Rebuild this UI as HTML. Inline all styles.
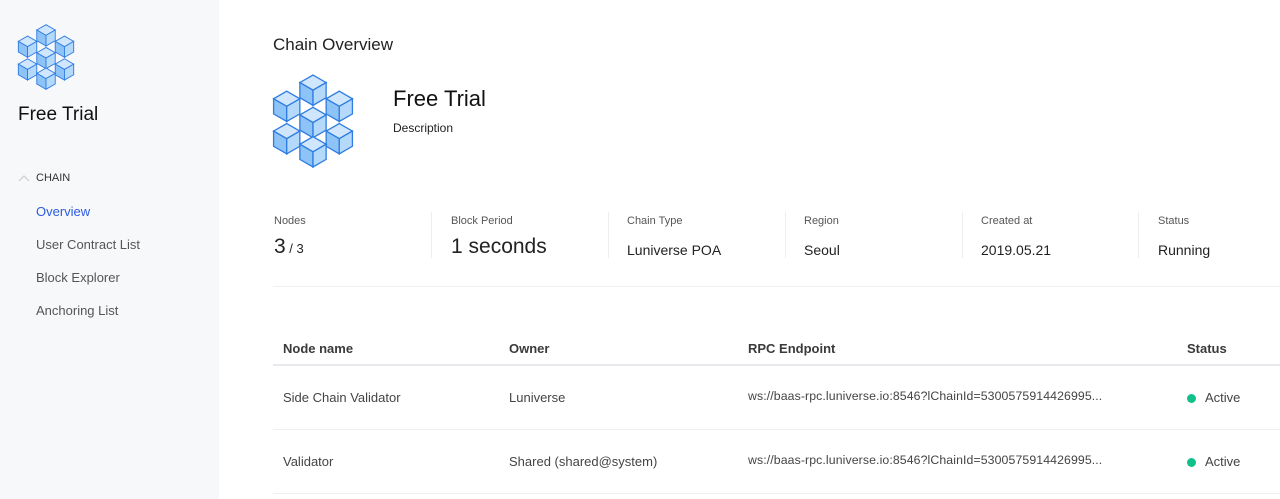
<!DOCTYPE html>
<html><head><meta charset="utf-8"><style>
*{margin:0;padding:0;box-sizing:border-box}
body{width:1280px;height:499px;overflow:hidden;background:#fff;font-family:"Liberation Sans",sans-serif;position:relative;color:#222}
.a{position:absolute;white-space:nowrap}
#side{position:absolute;left:0;top:0;width:219px;height:499px;background:#f7f8fa}
.lbl{font-size:11px;color:#555}
.val{font-size:14px;color:#222}
.div{position:absolute;top:212px;width:1px;height:46px;background:#eee}
.th{font-size:13px;color:#3a3a3a;font-weight:bold;top:341px}
.td{font-size:13px;color:#444}
.dot{position:absolute;width:9px;height:9px;border-radius:50%;background:#12c08a}
</style></head><body>
<svg width="0" height="0" style="position:absolute"><defs>
<g id="c"><polygon points="13,0 26,7.5 13,15 0,7.5" fill="#cfe6fd" stroke="#2f7de1" stroke-width="1.3"/><polygon points="0,7.5 13,15 13,30 0,22.5" fill="#8ec3f7" stroke="#2f7de1" stroke-width="1.3"/><polygon points="26,7.5 13,15 13,30 26,22.5" fill="#b5d9fb" stroke="#2f7de1" stroke-width="1.3"/></g>
<g id="ico"><g stroke="#9cc7f5" stroke-width="1"><line x1="14" y1="40" x2="67" y2="40"/><line x1="14" y1="72" x2="67" y2="72"/><line x1="40" y1="16" x2="40" y2="80"/></g><use href="#c" x="27" y="1"/><use href="#c" x="1" y="17"/><use href="#c" x="53" y="17"/><use href="#c" x="27" y="33"/><use href="#c" x="1" y="49"/><use href="#c" x="53" y="49"/><use href="#c" x="27" y="62"/></g>
</defs></svg>
<div id="side">
<svg class="a" style="left:16px;top:24px" width="60" height="66" viewBox="0 0 80 93"><use href="#ico"/></svg>
<div class="a" style="left:18px;top:104px;font-size:19px;color:#111">Free Trial</div>
<svg class="a" style="left:18px;top:174px" width="12" height="8"><polyline points="1,7 6,2 11,7" fill="none" stroke="#ccc" stroke-width="1.2"/></svg>
<div class="a" style="left:36px;top:172px;font-size:11px;color:#333">CHAIN</div>
<div class="a" style="left:36px;top:204px;font-size:13px;color:#2e5be0">Overview</div>
<div class="a" style="left:36px;top:237px;font-size:13px;color:#555">User Contract List</div>
<div class="a" style="left:36px;top:270px;font-size:13px;color:#555">Block Explorer</div>
<div class="a" style="left:36px;top:303px;font-size:13px;color:#555">Anchoring List</div>
</div>
<div class="a" style="left:273px;top:35px;font-size:17px;color:#222">Chain Overview</div>
<svg class="a" style="left:272px;top:74px" width="82" height="94" viewBox="0 0 80 93"><use href="#ico"/></svg>
<div class="a" style="left:393px;top:86px;font-size:22px;color:#111">Free Trial</div>
<div class="a" style="left:393px;top:121px;font-size:12px;color:#222">Description</div>

<div class="div" style="left:431px"></div><div class="div" style="left:608px"></div><div class="div" style="left:785px"></div><div class="div" style="left:962px"></div><div class="div" style="left:1138px"></div>
<div class="a lbl" style="left:274px;top:215px">Nodes</div>
<div class="a" style="left:274px;top:235px;font-size:21px">3<span style="font-size:13px"> / 3</span></div>
<div class="a lbl" style="left:451px;top:215px">Block Period</div>
<div class="a" style="left:451px;top:235px;font-size:21px">1 seconds</div>
<div class="a lbl" style="left:627px;top:215px">Chain Type</div>
<div class="a val" style="left:627px;top:242px">Luniverse POA</div>
<div class="a lbl" style="left:804px;top:215px">Region</div>
<div class="a val" style="left:804px;top:242px">Seoul</div>
<div class="a lbl" style="left:981px;top:215px">Created at</div>
<div class="a val" style="left:981px;top:242px">2019.05.21</div>
<div class="a lbl" style="left:1158px;top:215px">Status</div>
<div class="a val" style="left:1158px;top:242px">Running</div>
<div class="a" style="left:273px;top:286px;width:1007px;height:1px;background:#f0f0f0"></div>

<div class="a th" style="left:283px">Node name</div>
<div class="a th" style="left:509px">Owner</div>
<div class="a th" style="left:748px">RPC Endpoint</div>
<div class="a th" style="left:1187px">Status</div>
<div class="a" style="left:273px;top:364px;width:1007px;height:2px;background:#e8e9ec"></div>
<div class="a td" style="left:283px;top:390px">Side Chain Validator</div>
<div class="a td" style="left:509px;top:390px">Luniverse</div>
<div class="a td" style="left:748px;top:389px;font-size:12.3px;letter-spacing:0.1px">ws://baas-rpc.luniverse.io:8546?lChainId=5300575914426995...</div>
<div class="dot" style="left:1187px;top:394px"></div><div class="a td" style="left:1205px;top:390px">Active</div>
<div class="a" style="left:273px;top:429px;width:1007px;height:1px;background:#eee"></div>
<div class="a td" style="left:283px;top:454px">Validator</div>
<div class="a td" style="left:509px;top:454px">Shared (shared@system)</div>
<div class="a td" style="left:748px;top:453px;font-size:12.3px;letter-spacing:0.1px">ws://baas-rpc.luniverse.io:8546?lChainId=5300575914426995...</div>
<div class="dot" style="left:1187px;top:458px"></div><div class="a td" style="left:1205px;top:454px">Active</div>
<div class="a" style="left:273px;top:493px;width:1007px;height:1px;background:#eee"></div>
</body></html>
